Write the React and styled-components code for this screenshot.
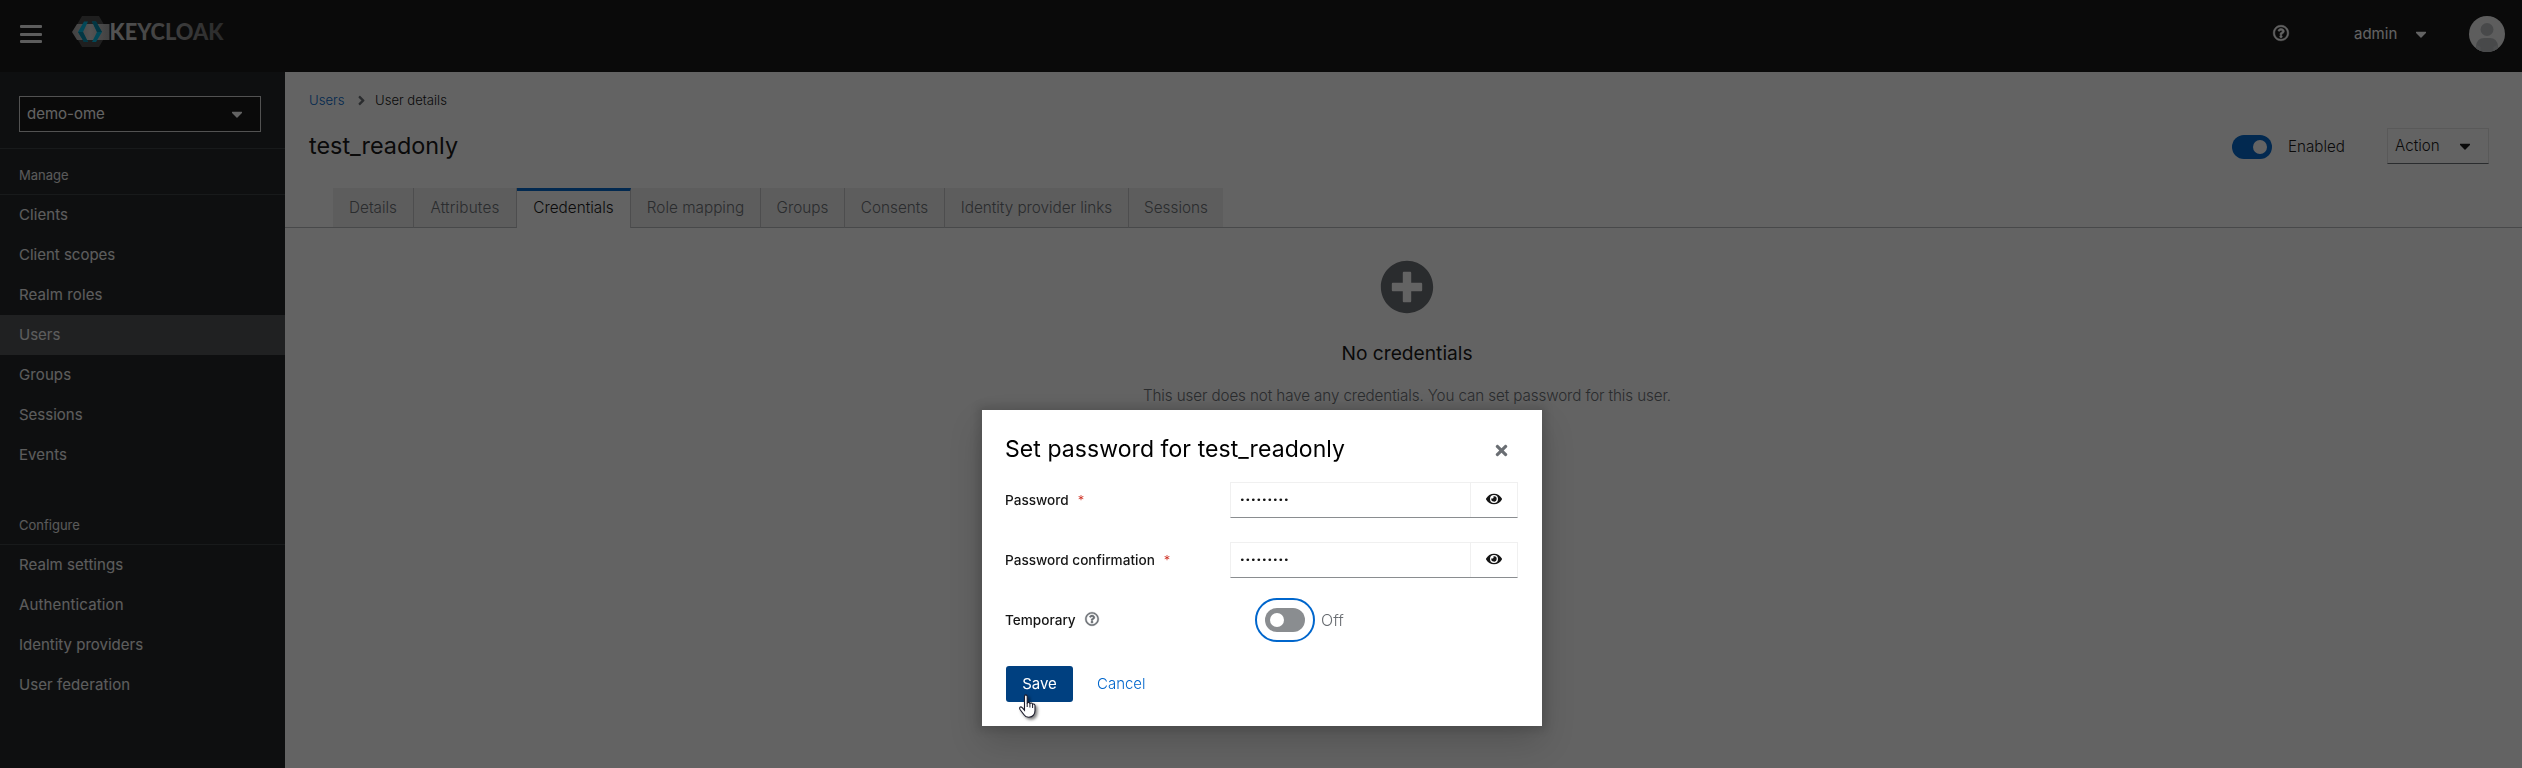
import React from "react";
import styled, { createGlobalStyle } from "styled-components";
import {
  FaAngleRight,
  FaCaretDown,
  FaEye,
  FaPlusCircle,
  FaRegQuestionCircle,
  FaTimes,
} from "react-icons/fa";

const GlobalStyle = createGlobalStyle`
  *, *::before, *::after { box-sizing: border-box; }
  body {
    margin: 0;
    overflow: hidden;
    background: #fff;
    color: #151515;
    font: 400 15px/24px Inter, "Liberation Sans", sans-serif;
  }
  svg { display: block; flex: none; }
  button { font: inherit; cursor: pointer; }
`;

const Label = styled.span`
  white-space: nowrap;
  letter-spacing: ${(p) => p.$track || 0}px;
`;

const Page = styled.div`
  height: 768px;
  display: flex;
  flex-direction: column;
`;

const Masthead = styled.header`
  height: 72px;
  flex: none;
  display: flex;
  align-items: center;
  padding: 0 17px 4px 20px;
  background: #151515;
  color: #fff;
`;

const MenuButton = styled.button`
  width: 22px;
  height: 18px;
  display: flex;
  flex-direction: column;
  justify-content: space-between;
  padding: 0;
  border: 0;
  background: none;
`;

const MenuBar = styled.span`
  height: 3px;
  border-radius: 1px;
  background: #f0f0f0;
`;

const Brand = styled.div`
  margin: -4px auto 0 30px;
`;

const HelpButton = styled.div`
  margin: -2px 65px 0 0;
  font-size: 16px;

  svg {
    stroke: currentColor;
    stroke-width: 18px;
    overflow: visible;
  }
`;

const UserMenu = styled.div`
  display: flex;
  align-items: center;
  gap: 19px;
  width: 115px;
`;

const Avatar = styled.svg`
  border-radius: 50%;
`;

const Body = styled.div`
  flex: 1;
  display: flex;
  min-height: 0;
`;

const Sidebar = styled.nav`
  width: 285px;
  flex: none;
  background: #212427;
  color: #fff;
`;

const RealmPicker = styled.div`
  padding: 24px 24px 16px 19px;
  border-bottom: 1px solid #3c3f42;
`;

const RealmToggle = styled.button`
  width: 100%;
  height: 36px;
  display: flex;
  align-items: center;
  justify-content: space-between;
  padding: 0 18px 0 7px;
  border: 1px solid #d2d2d2;
  background: #151515;
  color: #fff;
`;

const NavSection = styled.section`
  margin-bottom: 24px;
`;

const NavTitle = styled.h2`
  height: 46px;
  margin: 0;
  padding: 14px 19px 0;
  border-bottom: 1px solid #3c3f42;
  font-size: 13px;
  font-weight: 400;
  color: #e6e6e6;
`;

const NavItem = styled.a`
  display: block;
  height: 40px;
  padding: 8px 19px;
  color: #f0f0f0;
  background: ${(p) => (p.$active ? "#4f5255" : "transparent")};
`;

const Main = styled.main`
  flex: 1;
  min-width: 0;
  font-size: 15.2px;
  font-weight: 350;
`;

const Breadcrumb = styled.div`
  display: flex;
  align-items: center;
  height: 24px;
  margin: 16px 0 0 24px;
  font-size: 13.1px;
`;

const CrumbLink = styled.a`
  color: #06c;
  width: 45px;
`;

const CrumbDivider = styled.span`
  width: 21px;
  font-size: 15px;
  color: #6a6e73;
`;

const TitleRow = styled.div`
  display: flex;
  align-items: center;
  height: 36px;
  margin-top: 16px;
  padding: 0 33px 0 24px;
`;

const PageTitle = styled.h1`
  margin: -1px auto 0 0;
  font-size: 23.4px;
  font-weight: 400;
  line-height: 30px;
`;

const Track = styled.span`
  width: 40px;
  height: 24px;
  display: flex;
  align-items: center;
  justify-content: ${(p) => (p.$on ? "flex-end" : "flex-start")};
  padding: 0 5px;
  border-radius: 12px;
  background: ${(p) => (p.$on ? "#06c" : "#8a8d90")};
  outline: ${(p) => (p.$focused ? "2px solid #06c" : "none")};
  outline-offset: 8px;
`;

const Knob = styled.span`
  width: 14px;
  height: 14px;
  border-radius: 50%;
  background: #fff;
`;

const EnabledControl = styled.div`
  display: flex;
  align-items: center;
  gap: 16px;
  width: 155px;
  padding-top: 1px;
`;

const ActionButton = styled.button`
  width: 102px;
  height: 36px;
  display: flex;
  align-items: center;
  justify-content: space-between;
  padding: 0 18px 0 7px;
  border: 1px solid #e4e4e4;
  border-bottom-color: #6a6e73;
  background: #fff;
  color: #151515;
`;

const Tabs = styled.div`
  display: flex;
  height: 40px;
  margin-top: 24px;
  padding-left: 48px;
  font-size: 15.3px;
  box-shadow: inset 0 -1px #b8bbbe;
`;

const Tab = styled.div`
  width: ${(p) => p.$width}px;
  height: 40px;
  padding-top: ${(p) => (p.$active ? 5 : 8)}px;
  text-align: center;
  color: ${(p) => (p.$active ? "#151515" : "#6a6e73")};
  background: ${(p) => (p.$active ? "#fff" : "#f0f0f0")};
  border-top: ${(p) => (p.$active ? "3px solid #06c" : "0")};
  border-right: ${(p) => (p.$last ? "0" : "1px solid #c4c6c8")};
  border-bottom: ${(p) => (p.$active ? "0" : "1px solid #b8bbbe")};
`;

const EmptyState = styled.div`
  display: flex;
  flex-direction: column;
  align-items: center;
  padding: 32px 0 0 7px;
`;

const EmptyIcon = styled(FaPlusCircle)`
  width: 54px;
  height: 54px;
  color: #6a6e73;
`;

const EmptyTitle = styled.h2`
  margin: 25px 0 0;
  font-size: 19.2px;
  line-height: 28px;
  font-weight: 400;
`;

const EmptyText = styled.p`
  margin: 17px 0 0;
  color: #6a6e73;
  white-space: nowrap;
  letter-spacing: -0.105px;
`;

const Backdrop = styled.div`
  position: fixed;
  inset: 0;
  display: flex;
  justify-content: center;
  align-items: flex-start;
  padding: 410px 0 0 2px;
  background: rgba(3, 3, 3, 0.62);
`;

const Modal = styled.div`
  position: relative;
  width: 560px;
  height: 316px;
  padding: 24px;
  background: #fff;
  box-shadow: 0 16px 32px rgba(3, 3, 3, 0.16), 0 0 8px 4px rgba(3, 3, 3, 0.12);
`;

const ModalHeader = styled.div`
  height: 48px;
  display: flex;
  align-items: flex-start;
  justify-content: space-between;
  padding-right: 8px;
`;

const ModalTitle = styled.h2`
  margin: 0 0 0 -1px;
  font-size: 23px;
  line-height: 30px;
  font-weight: 400;
  letter-spacing: 0.07px;
  color: #000;
`;

const CloseIcon = styled(FaTimes)`
  width: 17px;
  height: 17px;
  margin-top: 8px;
  color: #6a6e73;
`;

const Field = styled.div`
  display: grid;
  grid-template-columns: 224px 1fr;
  align-items: center;
  height: 36px;
  margin-bottom: 24px;
`;

const FieldLabel = styled.label`
  display: flex;
  align-items: center;
  margin: -1px 0 0 -1px;
  font-size: 13.6px;
  font-weight: 500;
`;

const Required = styled.span`
  margin: 0 0 0 9px;
  color: #c9190b;
  font-size: 13px;
  font-weight: 350;
`;

const HintIcon = styled(FaRegQuestionCircle)`
  width: 14px;
  height: 14px;
  margin: -1px 0 0 9px;
  color: #6a6e73;
  stroke: currentColor;
  stroke-width: 14px;
  overflow: visible;
`;

const PasswordInput = styled.div`
  display: flex;
  width: 288px;
  height: 36px;
  border: 1px solid #f0f0f0;
  border-bottom-color: #8a8d90;
`;

const Dots = styled.span`
  flex: 1;
  padding-left: 8.6px;
  font: 400 9.5px/34px "DejaVu Sans", sans-serif;
  letter-spacing: -0.1px;
  color: #151515;
`;

const RevealButton = styled.span`
  width: 47px;
  display: flex;
  align-items: center;
  justify-content: center;
  padding-bottom: 2px;
  border-left: 1px solid #f0f0f0;
  font-size: 16px;
`;

const SwitchRow = styled.div`
  display: flex;
  align-items: center;
  gap: 16px;
  padding-left: 35px;
  color: #6a6e73;
  font-size: 16px;
  font-weight: 350;
`;

const ModalFooter = styled.div`
  display: flex;
  align-items: center;
  gap: 24px;
  padding-top: 4px;
`;

const SaveButton = styled.button`
  width: 67px;
  height: 36px;
  padding: 0;
  border: 0;
  border-radius: 3px;
  background: #004080;
  color: #fff;
`;

const CancelButton = styled.button`
  padding: 0;
  border: 0;
  background: none;
  color: #06c;
  font-weight: 350;
`;

const Pointer = styled.svg`
  position: absolute;
  left: 36px;
  top: 284px;
  filter: drop-shadow(2px 2px 1.5px rgba(0, 0, 0, 0.5));
`;

const Logo = () => (
  <svg width="154" height="32" viewBox="0 0 154 32">
    <defs>
      <linearGradient id="word" x1="0" x2="1">
        <stop offset="0" stopColor="#d6d6d6" />
        <stop offset="0.45" stopColor="#a8a8a8" />
        <stop offset="1" stopColor="#6a6a6a" />
      </linearGradient>
      <linearGradient id="band" x1="0" x2="1">
        <stop offset="0" stopColor="#a5a5a5" />
        <stop offset="0.5" stopColor="#d5d5d5" />
        <stop offset="1" stopColor="#a5a5a5" />
      </linearGradient>
    </defs>
    <path d="M10 0h17l9 15.5L27 31H10L1 15.5z" fill="#4d4d4d" />
    <path d="M5 8h32.500v16H5L0 16z" fill="url(#band)" />
    <path d="M12 5.500h4L11 16l5 10h-4L6 16z" fill="#00b8e3" />
    <path d="M6 16h5l5 10h-4z" fill="#008aaa" />
    <path d="M20 5.500h4L30 16l-6 10h-4l5-10z" fill="#00b8e3" />
    <path d="M20 5.500h4L30 16h-5z" fill="#008aaa" />
    <text
      x="37.500"
      y="24"
      fontFamily="Lato, sans-serif"
      fontWeight="900"
      fontSize="22"
      textLength="114"
      lengthAdjust="spacingAndGlyphs"
      fill="url(#word)"
    >
      KEYCLOAK
    </text>
  </svg>
);

const CaretIcon = styled(FaCaretDown)`
  width: 10px;
  height: 16px;
`;

const Caret = () => <CaretIcon viewBox="16 96 288 320" preserveAspectRatio="xMidYMid meet" />;

const Switch = ({ on, focused }) => (
  <Track $on={on} $focused={focused}>
    <Knob />
  </Track>
);

const manage = [
  ["Clients", 0.08],
  ["Client scopes", 0],
  ["Realm roles", 0.1],
  ["Users", 0],
  ["Groups", 0.1],
  ["Sessions", 0],
  ["Events", 0.1],
];

const configure = [
  ["Realm settings", 0.05],
  ["Authentication", 0.15],
  ["Identity providers", 0],
  ["User federation", 0.08],
];

const tabs = [
  ["Details", 81],
  ["Attributes", 103, 0.15],
  ["Credentials", 114],
  ["Role mapping", 130],
  ["Groups", 84],
  ["Consents", 100],
  ["Identity provider links", 184, -0.04],
  ["Sessions", 94],
];

const NavGroup = ({ title, items }) => (
  <NavSection>
    <NavTitle>{title}</NavTitle>
    {items.map(([name, track]) => (
      <NavItem key={name} $active={name === "Users"}>
        <Label $track={track}>{name}</Label>
      </NavItem>
    ))}
  </NavSection>
);

const PasswordField = ({ label }) => (
  <Field>
    <FieldLabel>
      {label}
      <Required>*</Required>
    </FieldLabel>
    <PasswordInput>
      <Dots>•••••••••</Dots>
      <RevealButton>
        <FaEye />
      </RevealButton>
    </PasswordInput>
  </Field>
);

export default function App() {
  return (
    <>
      <GlobalStyle />
      <Page>
        <Masthead>
          <MenuButton>
            <MenuBar />
            <MenuBar />
            <MenuBar />
          </MenuButton>
          <Brand>
            <Logo />
          </Brand>
          <HelpButton>
            <FaRegQuestionCircle />
          </HelpButton>
          <UserMenu>
            <Label>admin</Label>
            <Caret />
          </UserMenu>
          <Avatar width="36" height="36" viewBox="0 0 36 36">
            <rect width="36" height="36" fill="#f0f0f0" />
            <circle cx="18" cy="13.500" r="6.500" fill="#b8bbbe" />
            <path d="M7 36v-6q1-8 8-8h6q7 0 8 8v6z" fill="#b8bbbe" />
            <path d="M11.500 31v5h-4v-7zM24.500 31v5h4v-7z" fill="#c6c8ca" />
          </Avatar>
        </Masthead>
        <Body>
          <Sidebar>
            <RealmPicker>
              <RealmToggle>
                <Label>demo-ome</Label>
                <Caret />
              </RealmToggle>
            </RealmPicker>
            <NavGroup title="Manage" items={manage} />
            <NavGroup title="Configure" items={configure} />
          </Sidebar>
          <Main>
            <Breadcrumb>
              <CrumbLink>Users</CrumbLink>
              <CrumbDivider>
                <FaAngleRight />
              </CrumbDivider>
              <Label>User details</Label>
            </Breadcrumb>
            <TitleRow>
              <PageTitle>test_readonly</PageTitle>
              <EnabledControl>
                <Switch on />
                <Label>Enabled</Label>
              </EnabledControl>
              <ActionButton>
                <Label>Action</Label>
                <Caret />
              </ActionButton>
            </TitleRow>
            <Tabs>
              {tabs.map(([name, width, track], i) => (
                <Tab
                  key={name}
                  $width={width}
                  $active={name === "Credentials"}
                  $last={i === tabs.length - 1}
                >
                  <Label $track={track}>{name}</Label>
                </Tab>
              ))}
            </Tabs>
            <EmptyState>
              <EmptyIcon />
              <EmptyTitle>No credentials</EmptyTitle>
              <EmptyText>
                This user does not have any credentials. You can set password for this user.
              </EmptyText>
            </EmptyState>
          </Main>
        </Body>
      </Page>
      <Backdrop>
        <Modal>
          <ModalHeader>
            <ModalTitle>Set password for test_readonly</ModalTitle>
            <CloseIcon />
          </ModalHeader>
          <PasswordField label="Password" />
          <PasswordField label="Password confirmation" />
          <Field>
            <FieldLabel>
              Temporary
              <HintIcon />
            </FieldLabel>
            <SwitchRow>
              <Switch focused />
              <Label>Off</Label>
            </SwitchRow>
          </Field>
          <ModalFooter>
            <SaveButton>Save</SaveButton>
            <CancelButton>Cancel</CancelButton>
          </ModalFooter>
          <Pointer width="20" height="26" viewBox="0 0 20 26">
            <path
              d="M6.500 2.500q0-1.600 1.300-1.600T9.200 2.500v7q.2-1.200 1.400-1.100t1.300 1.500q.3-1 1.400-.9t1.300 1.500q.3-.7 1.200-.5t1.200 1.500v5q0 3-1.500 4.700-1.500 2-4.700 2-3.300 0-4.800-2.500L2 15.500q-.9-1.600 0-2.300t2.200.4l2.300 2.600z"
              fill="#fff"
              stroke="#1b1b2b"
              strokeWidth="1.100"
            />
            <path d="M9.200 9v4M11.900 10v3.500M14.600 11v3" stroke="#1b1b2b" fill="none" />
          </Pointer>
        </Modal>
      </Backdrop>
    </>
  );
}
